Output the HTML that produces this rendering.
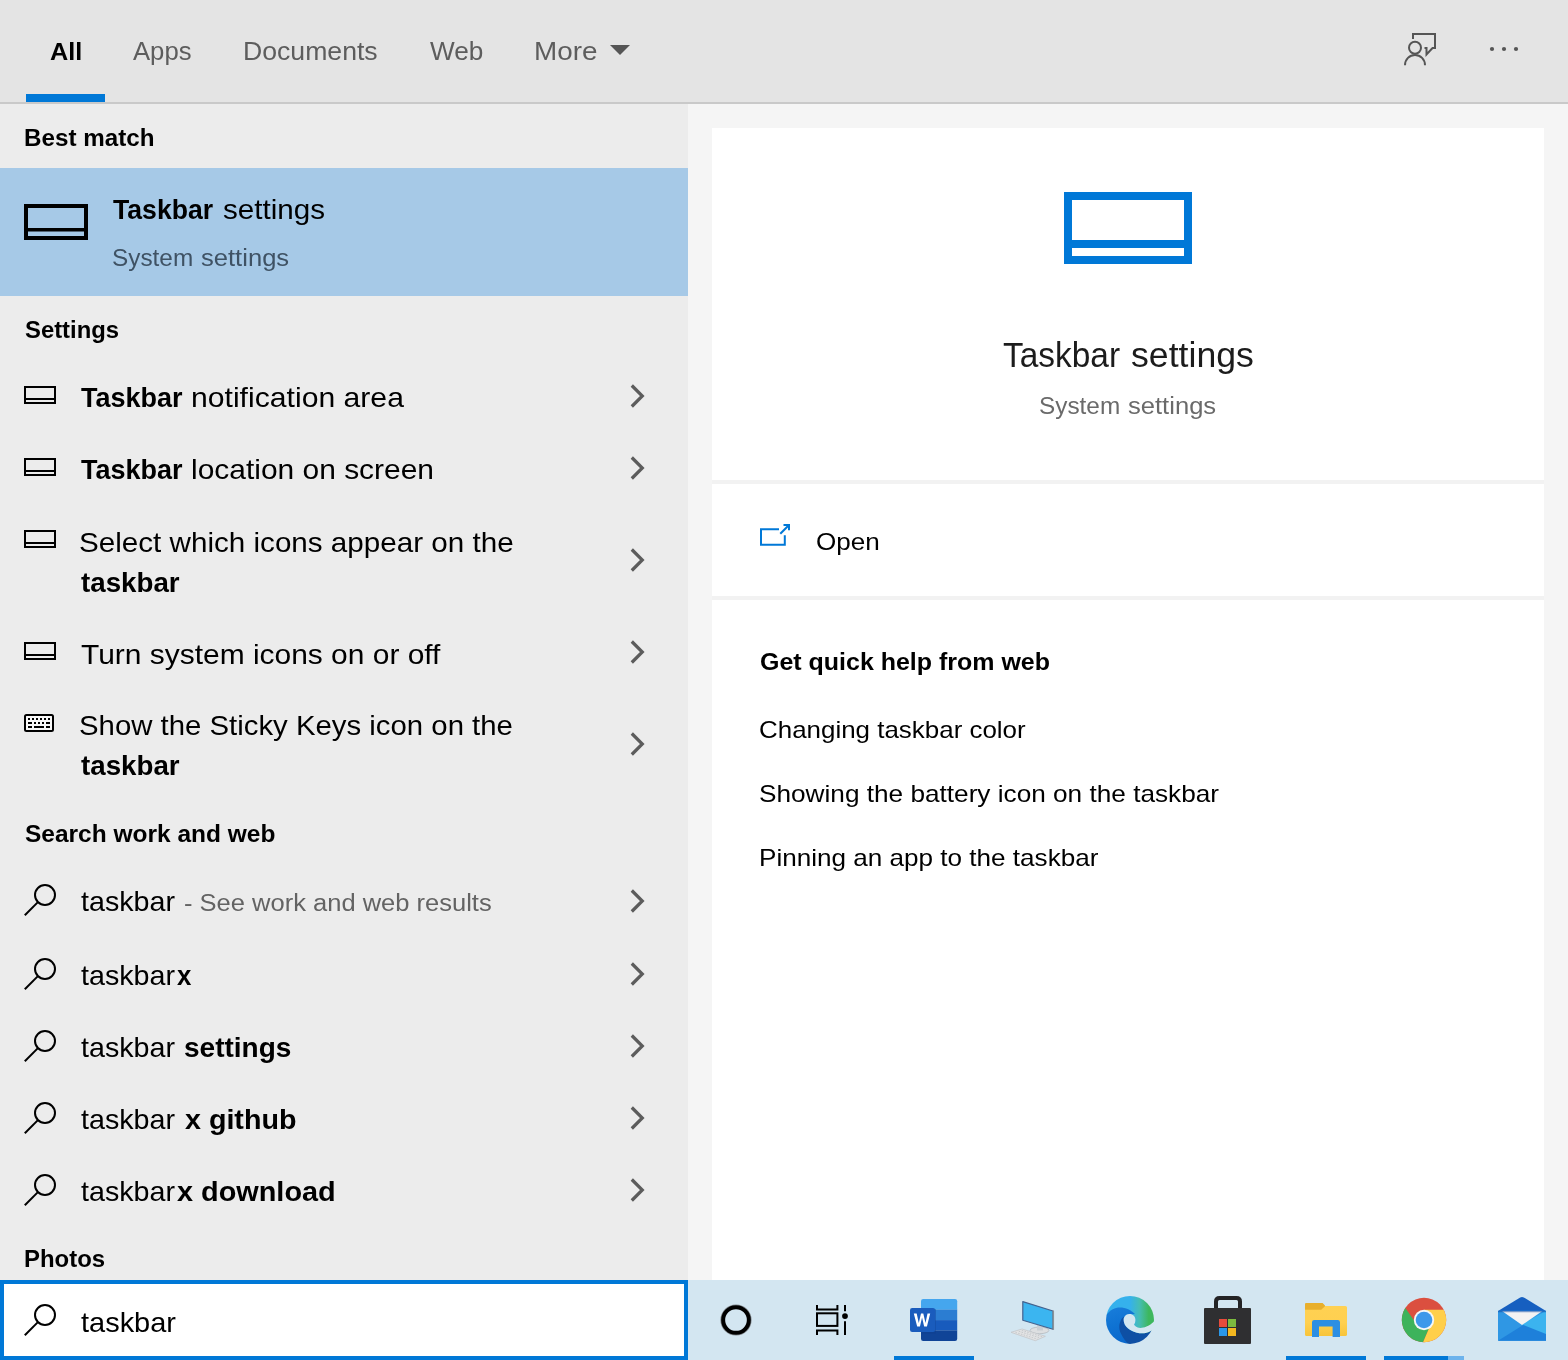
<!DOCTYPE html>
<html lang="en">
<head>
<meta charset="utf-8">
<title>Search</title>
<style>
*{margin:0;padding:0;box-sizing:border-box}
html,body{width:1568px;height:1360px;overflow:hidden;background:#ebebeb}
body{font-family:"Liberation Sans",sans-serif}
#root{position:relative;width:1568px;height:1360px;overflow:hidden;background:#ebebeb}
.a{position:absolute}
.t{position:absolute;white-space:pre;line-height:1;transform-origin:0 0;font-family:"Liberation Sans",sans-serif}
svg{position:absolute;overflow:visible}

</style>
</head>
<body>
<div id="root">
<!-- backgrounds -->
<div class="a" style="left:0;top:0;width:1568px;height:102px;background:#e4e4e4"></div>
<div class="a" style="left:0;top:102px;width:1568px;height:2px;background:#c9c9c9"></div>
<div class="a" style="left:0;top:104px;width:688px;height:1176px;background:#ececec"></div>
<div class="a" style="left:688px;top:104px;width:880px;height:1176px;background:#f5f5f5"></div>
<div class="a" style="left:712px;top:128px;width:832px;height:1152px;background:#fff"></div>
<div class="a" style="left:712px;top:480px;width:832px;height:4px;background:#f2f2f2"></div>
<div class="a" style="left:712px;top:596px;width:832px;height:4px;background:#f2f2f2"></div>
<!-- taskbar + search box backgrounds -->
<div class="a" style="left:688px;top:1280px;width:880px;height:80px;background:#d3e6f1"></div>
<div class="a" style="left:0;top:1280px;width:688px;height:80px;background:#fff;border:4px solid #0078d7"></div>
<!-- active tab underline -->
<div class="a" style="left:26px;top:94px;width:79px;height:8px;background:#0078d7"></div>
<!-- more caret -->
<svg style="left:610px;top:45px" width="20" height="10" viewBox="0 0 20 10"><path d="M0 0H20L10 10Z" fill="#555"/></svg>
<!-- feedback icon -->
<svg style="left:1400px;top:28px" width="44" height="44" viewBox="0 0 44 44" fill="none" stroke="#555" stroke-width="2">
  <path d="M13 11V6H35V20H32.5L26.5 26.5V20H24.5"/>
  <circle cx="15" cy="19.7" r="6"/>
  <path d="M5 37.2A10 10.3 0 0 1 25 37.2"/>
</svg>
<!-- ellipsis -->
<svg style="left:1488px;top:45px" width="32" height="8" viewBox="0 0 32 8"><circle cx="4" cy="4" r="2.1" fill="#555"/><circle cx="16" cy="4" r="2.1" fill="#555"/><circle cx="28" cy="4" r="2.1" fill="#555"/></svg>
<!-- selected row -->
<div class="a" style="left:0;top:168px;width:688px;height:128px;background:#a6c9e7"></div>
<svg style="left:24px;top:204px" width="64" height="36" viewBox="0 0 64 36" fill="none" stroke="#000" stroke-width="4"><rect x="2" y="2" width="60" height="32"/><path d="M2 25.7H62" stroke-width="3.4"/></svg>
<!-- big blue icon -->
<svg style="left:1064px;top:192px" width="128" height="72" viewBox="0 0 128 72" fill="none" stroke="#0078d7" stroke-width="8"><rect x="4" y="4" width="120" height="64"/><path d="M4 52H124"/></svg>
<!-- open icon -->
<svg style="left:758px;top:522px" width="34" height="26" viewBox="0 0 34 26" fill="none" stroke="#0078d7" stroke-width="2">
  <path d="M21 7.2H3V22.8H26.8V13.3"/>
  <path d="M22.3 11.7L31 3"/>
  <path d="M25.5 3H31V8.2"/>
</svg>
<svg style="left:24px;top:386px" width="32" height="18" viewBox="0 0 32 18" fill="none" stroke="#000" stroke-width="2"><rect x="1" y="1" width="30" height="16"/><path d="M1 13H31"/></svg>
<svg style="left:24px;top:458px" width="32" height="18" viewBox="0 0 32 18" fill="none" stroke="#000" stroke-width="2"><rect x="1" y="1" width="30" height="16"/><path d="M1 13H31"/></svg>
<svg style="left:24px;top:530px" width="32" height="18" viewBox="0 0 32 18" fill="none" stroke="#000" stroke-width="2"><rect x="1" y="1" width="30" height="16"/><path d="M1 13H31"/></svg>
<svg style="left:24px;top:642px" width="32" height="18" viewBox="0 0 32 18" fill="none" stroke="#000" stroke-width="2"><rect x="1" y="1" width="30" height="16"/><path d="M1 13H31"/></svg>
<svg style="left:24px;top:714px" width="30" height="18" viewBox="0 0 30 18"><rect x="1" y="1" width="28" height="16" rx="1.5" fill="#f8f8f8" stroke="#000" stroke-width="2"/><g fill="#000"><rect x="4" y="4" width="2" height="2"/><rect x="8" y="4" width="2" height="2"/><rect x="12" y="4" width="2" height="2"/><rect x="16" y="4" width="2" height="2"/><rect x="20" y="4" width="2" height="2"/><rect x="24" y="4" width="2" height="2"/><rect x="4" y="8" width="4" height="2"/><rect x="10" y="8" width="2" height="2"/><rect x="14" y="8" width="2" height="2"/><rect x="18" y="8" width="2" height="2"/><rect x="22" y="8" width="4" height="2"/><rect x="4" y="12" width="4" height="2"/><rect x="10" y="12" width="10" height="2"/><rect x="22" y="12" width="4" height="2"/></g></svg>
<svg style="left:24px;top:884px" width="32" height="32" viewBox="0 0 32 32" fill="none" stroke="#000" stroke-width="2"><circle cx="21" cy="11" r="10"/><path d="M13.9 18.1L0.8 31.2"/></svg>
<svg style="left:24px;top:958px" width="32" height="32" viewBox="0 0 32 32" fill="none" stroke="#000" stroke-width="2"><circle cx="21" cy="11" r="10"/><path d="M13.9 18.1L0.8 31.2"/></svg>
<svg style="left:24px;top:1030px" width="32" height="32" viewBox="0 0 32 32" fill="none" stroke="#000" stroke-width="2"><circle cx="21" cy="11" r="10"/><path d="M13.9 18.1L0.8 31.2"/></svg>
<svg style="left:24px;top:1102px" width="32" height="32" viewBox="0 0 32 32" fill="none" stroke="#000" stroke-width="2"><circle cx="21" cy="11" r="10"/><path d="M13.9 18.1L0.8 31.2"/></svg>
<svg style="left:24px;top:1174px" width="32" height="32" viewBox="0 0 32 32" fill="none" stroke="#000" stroke-width="2"><circle cx="21" cy="11" r="10"/><path d="M13.9 18.1L0.8 31.2"/></svg>
<svg style="left:24px;top:1304px" width="32" height="32" viewBox="0 0 32 32" fill="none" stroke="#000" stroke-width="2"><circle cx="21" cy="11" r="10"/><path d="M13.9 18.1L0.8 31.2"/></svg>
<svg style="left:628px;top:382px" width="20" height="28" viewBox="0 0 20 28" fill="none" stroke="#5c5c5c" stroke-width="3.2"><path d="M3.8 3.5L14.3 14L3.8 24.5"/></svg>
<svg style="left:628px;top:454px" width="20" height="28" viewBox="0 0 20 28" fill="none" stroke="#5c5c5c" stroke-width="3.2"><path d="M3.8 3.5L14.3 14L3.8 24.5"/></svg>
<svg style="left:628px;top:546px" width="20" height="28" viewBox="0 0 20 28" fill="none" stroke="#5c5c5c" stroke-width="3.2"><path d="M3.8 3.5L14.3 14L3.8 24.5"/></svg>
<svg style="left:628px;top:638px" width="20" height="28" viewBox="0 0 20 28" fill="none" stroke="#5c5c5c" stroke-width="3.2"><path d="M3.8 3.5L14.3 14L3.8 24.5"/></svg>
<svg style="left:628px;top:730px" width="20" height="28" viewBox="0 0 20 28" fill="none" stroke="#5c5c5c" stroke-width="3.2"><path d="M3.8 3.5L14.3 14L3.8 24.5"/></svg>
<svg style="left:628px;top:887px" width="20" height="28" viewBox="0 0 20 28" fill="none" stroke="#5c5c5c" stroke-width="3.2"><path d="M3.8 3.5L14.3 14L3.8 24.5"/></svg>
<svg style="left:628px;top:960px" width="20" height="28" viewBox="0 0 20 28" fill="none" stroke="#5c5c5c" stroke-width="3.2"><path d="M3.8 3.5L14.3 14L3.8 24.5"/></svg>
<svg style="left:628px;top:1032px" width="20" height="28" viewBox="0 0 20 28" fill="none" stroke="#5c5c5c" stroke-width="3.2"><path d="M3.8 3.5L14.3 14L3.8 24.5"/></svg>
<svg style="left:628px;top:1104px" width="20" height="28" viewBox="0 0 20 28" fill="none" stroke="#5c5c5c" stroke-width="3.2"><path d="M3.8 3.5L14.3 14L3.8 24.5"/></svg>
<svg style="left:628px;top:1176px" width="20" height="28" viewBox="0 0 20 28" fill="none" stroke="#5c5c5c" stroke-width="3.2"><path d="M3.8 3.5L14.3 14L3.8 24.5"/></svg>

<span class="t" style="left:50.00px;top:39.50px;font-size:24px;font-weight:700;color:#000;transform:scaleX(1.0517)">All</span>
<span class="t" style="left:133.20px;top:38.90px;font-size:25px;font-weight:400;color:#5d5d5d;transform:scaleX(1.0269)">Apps</span>
<span class="t" style="left:242.87px;top:38.90px;font-size:25px;font-weight:400;color:#5d5d5d;transform:scaleX(1.0650)">Documents</span>
<span class="t" style="left:430.00px;top:38.90px;font-size:25px;font-weight:400;color:#5d5d5d;transform:scaleX(1.0470)">Web</span>
<span class="t" style="left:533.77px;top:38.90px;font-size:25px;font-weight:400;color:#5d5d5d;transform:scaleX(1.1137)">More</span>
<span class="t" style="left:23.97px;top:126.75px;font-size:23.5px;font-weight:700;color:#000;transform:scaleX(1.0296)">Best match</span>
<span class="t" style="left:113.00px;top:194.50px;font-size:28.5px;font-weight:700;color:#000;transform:scaleX(0.9337)">Taskbar</span>
<span class="t" style="left:223.25px;top:194.50px;font-size:28.5px;font-weight:400;color:#000;transform:scaleX(1.0386)">settings</span>
<span class="t" style="left:111.94px;top:246.75px;font-size:23px;font-weight:400;color:#3f5264;transform:scaleX(1.0587)">System</span>
<span class="t" style="left:201.40px;top:246.75px;font-size:23px;font-weight:400;color:#3f5264;transform:scaleX(1.1122)">settings</span>
<span class="t" style="left:25.00px;top:319.00px;font-size:23.5px;font-weight:700;color:#000;transform:scaleX(1.0147)">Settings</span>
<span class="t" style="left:80.50px;top:383.25px;font-size:28.5px;font-weight:700;color:#000;transform:scaleX(0.9477)">Taskbar</span>
<span class="t" style="left:190.94px;top:383.25px;font-size:28.5px;font-weight:400;color:#000;transform:scaleX(1.0581)">notification area</span>
<span class="t" style="left:80.50px;top:455.25px;font-size:28.5px;font-weight:700;color:#000;transform:scaleX(0.9477)">Taskbar</span>
<span class="t" style="left:190.95px;top:455.25px;font-size:28.5px;font-weight:400;color:#000;transform:scaleX(1.0505)">location on screen</span>
<span class="t" style="left:79.46px;top:527.50px;font-size:28.5px;font-weight:400;color:#000;transform:scaleX(1.0392)">Select which icons appear on the</span>
<span class="t" style="left:80.50px;top:567.50px;font-size:28.5px;font-weight:700;color:#000;transform:scaleX(0.9723)">taskbar</span>
<span class="t" style="left:80.50px;top:639.50px;font-size:28.5px;font-weight:400;color:#000;transform:scaleX(1.0505)">Turn system icons on or off</span>
<span class="t" style="left:79.47px;top:711.25px;font-size:28.5px;font-weight:400;color:#000;transform:scaleX(1.0297)">Show the Sticky Keys icon on the</span>
<span class="t" style="left:80.50px;top:751.00px;font-size:28.5px;font-weight:700;color:#000;transform:scaleX(0.9723)">taskbar</span>
<span class="t" style="left:25.00px;top:822.75px;font-size:23.5px;font-weight:700;color:#000;transform:scaleX(1.0419)">Search work and web</span>
<span class="t" style="left:80.50px;top:887.00px;font-size:28.5px;font-weight:400;color:#000;transform:scaleX(1.0056)">taskbar</span>
<span class="t" style="left:183.89px;top:891.75px;font-size:23px;font-weight:400;color:#636363;transform:scaleX(1.1091)">- See work and web results</span>
<span class="t" style="left:80.50px;top:960.75px;font-size:28.5px;font-weight:400;color:#000;transform:scaleX(1.0056)">taskbar</span>
<span class="t" style="left:176.50px;top:960.75px;font-size:28.5px;font-weight:700;color:#000;transform:scaleX(0.9062)">x</span>
<span class="t" style="left:80.50px;top:1033.25px;font-size:28.5px;font-weight:400;color:#000;transform:scaleX(1.0056)">taskbar</span>
<span class="t" style="left:184.02px;top:1033.25px;font-size:28.5px;font-weight:700;color:#000;transform:scaleX(0.9821)">settings</span>
<span class="t" style="left:80.50px;top:1105.00px;font-size:28.5px;font-weight:400;color:#000;transform:scaleX(1.0056)">taskbar</span>
<span class="t" style="left:185.00px;top:1105.00px;font-size:28.5px;font-weight:700;color:#000;transform:scaleX(1.0054)">x github</span>
<span class="t" style="left:80.50px;top:1177.00px;font-size:28.5px;font-weight:400;color:#000;transform:scaleX(1.0056)">taskbar</span>
<span class="t" style="left:176.50px;top:1177.00px;font-size:28.5px;font-weight:700;color:#000;transform:scaleX(1.0123)">x download</span>
<span class="t" style="left:23.98px;top:1247.75px;font-size:23.5px;font-weight:700;color:#000;transform:scaleX(1.0183)">Photos</span>
<span class="t" style="left:80.50px;top:1307.50px;font-size:28.5px;font-weight:400;color:#000;transform:scaleX(1.0163)">taskbar</span>
<span class="t" style="left:1002.60px;top:336.50px;font-size:35px;font-weight:400;color:#1c1c1c;transform:scaleX(0.9553)">Taskbar</span>
<span class="t" style="left:1131.00px;top:336.50px;font-size:35px;font-weight:400;color:#1c1c1c;transform:scaleX(1.0190)">settings</span>
<span class="t" style="left:1038.94px;top:395.10px;font-size:23px;font-weight:400;color:#6a6a6a;transform:scaleX(1.0587)">System</span>
<span class="t" style="left:1128.40px;top:395.10px;font-size:23px;font-weight:400;color:#6a6a6a;transform:scaleX(1.1122)">settings</span>
<span class="t" style="left:815.61px;top:530.10px;font-size:24px;font-weight:400;color:#000;transform:scaleX(1.0858)">Open</span>
<span class="t" style="left:760.40px;top:650.75px;font-size:23.5px;font-weight:700;color:#000;transform:scaleX(1.0626)">Get quick help from web</span>
<span class="t" style="left:759.32px;top:717.90px;font-size:24px;font-weight:400;color:#000;transform:scaleX(1.0805)">Changing taskbar color</span>
<span class="t" style="left:759.31px;top:781.90px;font-size:24px;font-weight:400;color:#000;transform:scaleX(1.0911)">Showing the battery icon on the taskbar</span>
<span class="t" style="left:759.31px;top:846.10px;font-size:24px;font-weight:400;color:#000;transform:scaleX(1.0870)">Pinning an app to the taskbar</span>
<!-- taskbar -->
<!-- running indicators -->
<div class="a" style="left:894px;top:1356px;width:80px;height:4px;background:#0078d7"></div>
<div class="a" style="left:1286px;top:1356px;width:80px;height:4px;background:#0078d7"></div>
<div class="a" style="left:1384px;top:1356px;width:80px;height:4px;background:#6db3ec"></div>
<div class="a" style="left:1384px;top:1356px;width:64px;height:4px;background:#0078d7"></div>
<!-- cortana -->
<svg style="left:718px;top:1302px" width="36" height="36" viewBox="0 0 36 36" fill="none"><circle cx="18" cy="18" r="14.9" stroke="#7f868b" stroke-width="1.4"/><circle cx="18" cy="18" r="12.85" stroke="#000" stroke-width="4"/></svg>
<!-- task view -->
<svg style="left:814px;top:1303px" width="36" height="34" viewBox="0 0 36 34" fill="none" stroke="#000" stroke-width="2">
  <rect x="3" y="10.3" width="20.4" height="12.6"/>
  <path d="M3 2V6.4H23.4V2"/>
  <path d="M3 32V27.6H23.4V32"/>
  <path d="M31 2V8.2M31 18.2V32"/>
  <circle cx="31" cy="13.1" r="2.9" fill="#000" stroke="none"/>
</svg>
<!-- word -->
<svg style="left:908px;top:1297px" width="52" height="46" viewBox="0 0 52 46">
  <defs><clipPath id="wc"><rect x="13" y="2" width="36.2" height="42" rx="2.2"/></clipPath></defs>
  <g clip-path="url(#wc)">
    <rect x="13" y="2" width="37" height="10.7" fill="#45a6ee"/>
    <rect x="13" y="12.6" width="37" height="10.6" fill="#2b7dd2"/>
    <rect x="13" y="23.1" width="37" height="10.4" fill="#185bbd"/>
    <rect x="13" y="33.4" width="37" height="10.8" fill="#104497"/>
  </g>
  <rect x="13" y="12" width="15" height="24.6" fill="#0d3c8a" opacity=".35"/>
  <rect x="2" y="11" width="25.2" height="24" rx="2.2" fill="#1a5cbd"/>
  <path d="M6.2 16.2H9.2L11.4 26.2L13.7 16.2H16.1L18.4 26.2L20.5 16.2H23.3L19.9 30H17L14.8 20.6L12.6 30H9.7Z" fill="#fff" transform="translate(5.8 16.4) scale(.959 .957) translate(-6.2 -16.2)"/>
</svg>
<!-- this pc -->
<svg style="left:1008px;top:1298px" width="50" height="46" viewBox="0 0 50 46">
  <ellipse cx="31.5" cy="32.4" rx="9.4" ry="3.3" fill="#dddfe1" stroke="#b4babf" stroke-width=".8"/>
  <path d="M29 27L35 28.8V32.6H29Z" fill="#c9cfd4"/>
  <path d="M3 34.3L14.1 31L37.4 38.3L27.3 42.7Z" fill="#e2e3e4" stroke="#c4c7ca" stroke-width=".8"/>
  <path d="M7.5 34.4L29.6 41.2M10.8 33.3L32.4 40M13.8 32.4L35 39" stroke="#c3c6c9" stroke-width=".9" stroke-dasharray="1.6 1.2" fill="none"/>
  <path d="M14.8 3.6L45 13V31.3L14.8 22.2Z" fill="#3bb5f0" stroke="#44628e" stroke-width="1.2" stroke-linejoin="round"/>
  <path d="M45.3 12.6V31.8" stroke="#8c9297" stroke-width="1.5"/>
</svg>
<!-- edge -->
<svg style="left:1104px;top:1294px" width="52" height="52" viewBox="0 0 52 52">
  <defs>
    <linearGradient id="eg1" x1="0" y1="0" x2="1" y2="0"><stop offset="0" stop-color="#35b1ec"/><stop offset=".5" stop-color="#35b1ec"/><stop offset=".68" stop-color="#45bdb4"/><stop offset=".86" stop-color="#3db75d"/><stop offset="1" stop-color="#3db75d"/></linearGradient>
    <linearGradient id="eg2" x1="0" y1="0" x2="0.3" y2="1"><stop offset="0" stop-color="#1a7edb"/><stop offset=".5" stop-color="#0f73d3"/><stop offset="1" stop-color="#0a68cc"/></linearGradient>
    <mask id="em" maskUnits="userSpaceOnUse" x="0" y="0" width="52" height="52"><circle cx="26" cy="25.9" r="24" fill="#fff"/><path d="M19.8 24.2C20.5 21.5 23 20 25.6 20C29 20 31.5 22.8 31.4 26C31.3 28 30.8 29.5 30 30.8C32 33 34 33.9 36.5 33.9C40 33.8 44.5 32.6 50 27.5L54 27V36L47.5 36.5C44 38.8 41 39.2 38 39.3C32 39.4 24 36 20.7 30.4C19.6 28 19.4 26 19.8 24.2Z" fill="#000"/></mask>
  </defs>
  <g mask="url(#em)">
    <rect x="0" y="0" width="52" height="52" fill="url(#eg1)"/>
    <path d="M0 25C2 21 6 14.6 14 13.5C20 12.8 27 15.5 31 20L22.5 20.7L19.8 24.2L24.7 52H0Z" fill="url(#eg2)"/>
    <path d="M19.8 22.5C14.5 27 14.3 35 17.2 40.1C19 44 22 48 24.7 50.5L33 53H53V36L47.5 36.5C44 38.8 41 39.2 38 39.3C32 39.4 24 36 20.7 30.4C19.6 28 19.4 25 19.8 22.5Z" fill="#0e4fa4"/>
  </g>
</svg>
<!-- store -->
<svg style="left:1202px;top:1294px" width="52" height="52" viewBox="0 0 52 52">
  <path d="M14 16V7.5Q14 4 17.5 4H34.5Q38 4 38 7.5V16" fill="none" stroke="#232325" stroke-width="4"/>
  <rect x="2" y="14" width="47" height="36" rx="1" fill="#2f2f31"/>
  <rect x="17" y="25" width="8" height="8" fill="#e74c3c"/>
  <rect x="26" y="25" width="8" height="8" fill="#7cbb3f"/>
  <rect x="17" y="34" width="8" height="8" fill="#2a97e8"/>
  <rect x="26" y="34" width="8" height="8" fill="#f3b720"/>
</svg>
<!-- explorer -->
<svg style="left:1302px;top:1300px" width="48" height="40" viewBox="0 0 48 40">
  <defs><linearGradient id="fg" x1="0" y1="0" x2="0" y2="1"><stop offset="0" stop-color="#ffd152"/><stop offset=".55" stop-color="#ffd050"/><stop offset="1" stop-color="#f8c43a"/></linearGradient></defs>
  <rect x="3" y="6" width="42" height="30" rx="1.6" fill="url(#fg)"/>
  <path d="M3 4Q3 3 4 3H20.6L23 5.4V6.3L19.2 9.7H3Z" fill="#e8af2c"/>
  <path d="M10 22.2Q10 20 12.2 20H35.8Q38 20 38 22.2V37H30.6V26.5H17V37H10Z" fill="#2d8fe3"/>
</svg>
<!-- chrome -->
<svg style="left:1400px;top:1296px" width="48" height="48" viewBox="0 0 48 48">
  <defs><clipPath id="cc"><circle cx="24" cy="24" r="22.2"/></clipPath></defs>
  <g clip-path="url(#cc)">
    <rect width="48" height="48" fill="#db4f3f"/>
    <path d="M0 4.3L14.4 25.1L24 24L31 27.8L23.4 45.6L22 50H-5V4Z" fill="#3db35b"/>
    <path d="M24 13.8H50V50H22L23.4 45.6L31 27.8L24 24Z" fill="#ffcf4a"/>
  </g>
  <circle cx="24" cy="24" r="10.2" fill="#f4f6f7"/>
  <circle cx="24" cy="24" r="8.3" fill="#3d98ea"/>
</svg>
<!-- mail -->
<svg style="left:1496px;top:1294px" width="52" height="50" viewBox="0 0 52 50">
  <path d="M2 17L24.2 3.4Q26 2.4 27.8 3.4L50 17Z" fill="#165fc0"/>
  <rect x="2" y="16.8" width="48" height="30" fill="#2f97e4"/>
  <path d="M50 16.8V46.8H2Z" fill="#1e80da"/>
  <path d="M50 16.8V40L26 30.5Z" fill="#3bb3ef"/>
  <path d="M6 17H46.4L26 31Z" fill="#f3f3f3"/>
  <path d="M2 17H50V18.2H2Z" fill="#0f4fa8" opacity=".55"/>
</svg>

</div>
</body>
</html>
